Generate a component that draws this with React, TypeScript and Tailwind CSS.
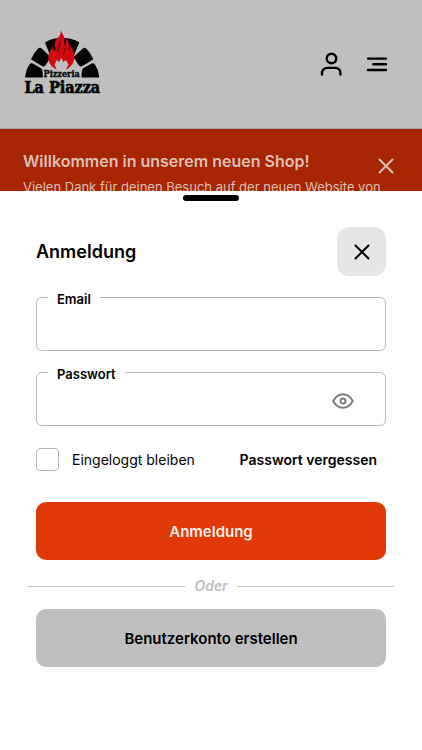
import React, { useState } from 'react';

const Logo = () => (
  <svg viewBox="42 30 231 207" className="w-[77px] h-[69px] overflow-visible" role="img" aria-label="Pizzeria La Piazza">
    <g fill="#050505" stroke="#050505" strokeWidth="5" strokeLinejoin="round">
      <path d="M48 170 Q50 150 60 135 Q63 131 67 133 L92 147 Q96 150 96 170 Z" />
      <path d="M66 117 Q74 99 86 87 Q90 84 94 88 L119 112 L104 135 Q101 138 97 136 Z" />
      <path d="M108 68 Q132 56 156 56 Q181 56 205 68 L190 104 L122 104 Z" />
      <path d="M247 117 Q239 99 227 87 Q223 84 219 88 L194 112 L209 135 Q212 138 216 136 Z" />
      <path d="M265 170 Q263 150 253 135 Q250 131 246 133 L221 147 Q217 150 217 170 Z" />
    </g>
    <path d="M126 104 L186 104 L182 147 L131 147 Z" fill="#bfbfbf" />
    <path
      d="M152 31 C158 45 166 50 163 66 C162 73 165 78 167 70 C169 63 168 58 165 53 C179 64 177 75 176 86 C176 94 180 90 180 76 C190 89 195 101 193 115 C191 131 181 144 168 149 L175 133 L168 120 L160 126 L154 113 L148 126 L140 120 L134 134 L140 149 C123 141 113 126 115 109 C116 98 124 91 128 77 C130 88 132 95 136 90 C140 85 131 78 135 66 C139 55 154 50 152 31 Z"
      fill="#d20a11"
    />
    <path d="M150 66 C152 78 142 84 145 95 M166 84 C165 93 158 97 161 105" fill="none" stroke="#5d0507" strokeWidth="3" strokeLinecap="round" />
    <g fill="#050505" stroke="#050505" fontWeight="700" textAnchor="middle" fontFamily="'DejaVu Serif Condensed', 'DejaVu Serif', serif">
      <text x="155" y="171" fontSize="27" strokeWidth="1">Pizzeria</text>
      <text x="157" y="219" fontSize="48" strokeWidth="2">La Piazza</text>
    </g>
  </svg>
);

const CrossIcon = () => (
  <svg viewBox="0 0 16 16" className="size-4" fill="none" stroke="currentColor" strokeWidth="2" strokeLinecap="round" aria-hidden="true">
    <path d="M1.5 1.5l13 13M14.5 1.5l-13 13" />
  </svg>
);

const Header = () => (
  <header className="flex items-center justify-between h-[129px] pl-6 pr-[34px] bg-[#bfbfbf] border-b border-[#a8a29f]">
    <a href="#"><Logo /></a>
    <div className="flex items-center gap-6">
      <button type="button" aria-label="Konto">
        <svg viewBox="0 0 22 24" className="w-[22px] h-6" fill="none" stroke="#000" strokeWidth="2.4" strokeLinecap="round" aria-hidden="true">
          <circle cx="11.5" cy="6.5" r="4.8" />
          <path d="M2 22.6v-1.4c0-3.3 2.2-5.3 5.4-5.3h7.6c3.2 0 5.4 2 5.4 5.3v1.4" />
        </svg>
      </button>
      <button type="button" aria-label="Menü">
        <svg viewBox="0 0 22 16" className="w-[22px] h-4" fill="none" stroke="#000" strokeWidth="2.4" strokeLinecap="round" aria-hidden="true">
          <path d="M2 2.6h18M7.3 8.3h12.7M2 14h18" />
        </svg>
      </button>
    </div>
  </header>
);

const Banner = () => (
  <section className="flex items-start justify-between h-[62px] overflow-hidden pl-[23px] pr-7 pt-5 bg-[#a72500] text-[#dcc0b8]">
    <div className="flex-1 min-w-0">
      <h2 className="text-base leading-6 font-semibold">Willkommen in unserem neuen Shop!</h2>
      <p className="mt-1 text-[13px] leading-5 whitespace-nowrap">Vielen Dank für deinen Besuch auf der neuen Website von</p>
    </div>
    <button type="button" aria-label="Hinweis schließen" className="mt-[9px]"><CrossIcon /></button>
  </section>
);

type FieldProps = {
  id: string;
  label: string;
  type: string;
  children?: React.ReactNode;
};

const Field = ({ id, label, type, children }: FieldProps) => (
  <div className="relative flex items-center h-[54px] border border-[#b8b8b8] rounded-md">
    <label htmlFor={id} className="absolute left-[11px] -top-[7px] px-[9px] bg-white text-[13px] leading-4 font-semibold">{label}</label>
    <input id={id} type={type} className="flex-1 min-w-0 h-full px-5 bg-transparent text-base outline-none" />
    {children}
  </div>
);

const LoginSheet = () => {
  const [showPassword, setShowPassword] = useState(false);

  return (
    <main role="dialog" aria-labelledby="login-title" className="flex-1 px-9 pt-1 pb-8 bg-white">
      <div className="w-14 h-[6px] mx-auto rounded-full bg-black" />

      <div className="flex items-center justify-between mt-[26px]">
        <h1 id="login-title" className="text-lg leading-6 font-semibold">Anmeldung</h1>
        <button type="button" aria-label="Schließen" className="flex items-center justify-center size-[49px] rounded-xl bg-[#e5e5e5]">
          <CrossIcon />
        </button>
      </div>

      <form className="mt-[21px]" onSubmit={(e) => e.preventDefault()}>
        <div className="flex flex-col gap-[21px]">
          <Field id="email" label="Email" type="email" />
          <Field id="password" label="Passwort" type={showPassword ? 'text' : 'password'}>
            <button type="button" aria-label="Passwort anzeigen" className="mt-1 mr-[31px] text-[#7d7d7d]" onClick={() => setShowPassword(!showPassword)}>
              <svg viewBox="0 0 22 16" className="w-[22px] h-4" fill="none" stroke="currentColor" strokeWidth="2" strokeLinejoin="round" aria-hidden="true">
                <path d="M1.2 8C3.5 3.8 7 1.2 11 1.2S18.5 3.8 20.8 8C18.5 12.2 15 14.8 11 14.8S3.5 12.2 1.2 8Z" />
                <circle cx="11" cy="8" r="2.5" />
              </svg>
            </button>
          </Field>
        </div>

        <div className="flex items-center justify-between mt-[22px] pr-[9px] text-sm leading-5">
          <label className="flex items-center gap-[13px]">
            <input type="checkbox" className="appearance-none size-[23px] border border-[#b8b8b8] rounded checked:bg-[#e03807]" />
            Eingeloggt bleiben
          </label>
          <a href="#" className="font-semibold">Passwort vergessen</a>
        </div>

        <button type="submit" className="w-full h-[58px] mt-[31px] pt-[2px] rounded-[10px] bg-[#e03807] text-[15px] font-semibold text-[#fdeee9]">Anmeldung</button>
      </form>

      <div className="flex items-center gap-[9px] -mx-2 mt-4 text-[#bdbdbd]">
        <span className="flex-1 h-px bg-[#bdbdbd]" />
        <span className="text-sm leading-5 font-semibold italic">Oder</span>
        <span className="flex-1 h-px bg-[#bdbdbd]" />
      </div>

      <button type="button" className="w-full h-[58px] mt-[13px] pt-[2px] rounded-[10px] bg-[#bfbfbf] text-[15px] font-semibold">Benutzerkonto erstellen</button>
    </main>
  );
};

const App = () => (
  <div className="flex flex-col min-h-screen font-['Inter',sans-serif] text-black">
    <Header />
    <Banner />
    <LoginSheet />
  </div>
);

export default App;
